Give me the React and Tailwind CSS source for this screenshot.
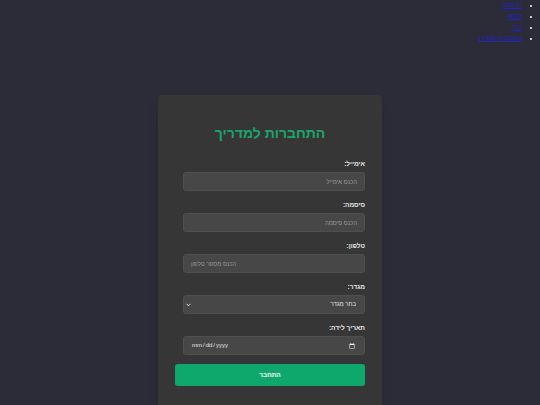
import React from 'react';

const navLinks = ['הרשמה', 'כניסה', 'בית', 'התחברות למדריך'];

const inputClass =
    'block w-[182px] h-[19px] rounded-[3px] bg-[#474747] border border-[#4f4f4f] px-[7px] text-[6px] text-[#e5e5e5] placeholder:text-[#9a9a9a] outline-none';

function Field({ label, children }) {
    return (
        <div className="flex flex-col items-start mb-[10px]">
            <label className="text-[6.5px] leading-[8px] font-bold text-[#e6e6e6] mb-[4px]">{label}</label>
            {children}
        </div>
    );
}

export default function App() {
    return (
        <div
            dir="rtl"
            className="min-h-screen bg-[#2b2c37] pb-10"
            style={{ fontFamily: '"Liberation Sans", "DejaVu Sans", sans-serif' }}
        >
            {/* תפריט עליון */}
            <ul className="list-disc pr-[18px] text-[6px] marker:text-white">
                {navLinks.map((item) => (
                    <li key={item} className="h-[11px] leading-[11px]">
                        <a href="#" className="text-[#2222cc] underline">{item}</a>
                    </li>
                ))}
            </ul>

            {/* כרטיס התחברות */}
            <div className="mx-auto mt-[51px] w-[224px] rounded-[4px] bg-[#363636] px-[17px] pt-[30px] pb-[24px] shadow-lg">
                <h1 className="text-center text-[14px] leading-[16px] font-bold text-[#19a56c] mb-[19px]">
                    התחברות למדריך
                </h1>

                <form>
                    <Field label="אימייל:">
                        <input type="email" placeholder="הכנס אימייל" className={inputClass} />
                    </Field>
                    <Field label="סיסמה:">
                        <input type="password" placeholder="הכנס סיסמה" className={inputClass} />
                    </Field>
                    <Field label="טלפון:">
                        <input type="tel" placeholder="הכנס מספר טלפון" className={inputClass} />
                    </Field>
                    <Field label="מגדר:">
                        <div className="relative">
                            <select className={inputClass + ' appearance-none pr-[8px] text-[#dcdcdc]'} defaultValue="">
                                <option value="">בחר מגדר</option>
                                <option value="male">זכר</option>
                                <option value="female">נקבה</option>
                            </select>
                            <svg
                                className="pointer-events-none absolute left-[3px] top-[8px]"
                                width="5"
                                height="4"
                                viewBox="0 0 5 4"
                            >
                                <path d="M0.6 0.8 L2.5 2.8 L4.4 0.8" fill="none" stroke="#e0e0e0" strokeWidth="1" />
                            </svg>
                        </div>
                    </Field>
                    <Field label="תאריך לידה:">
                        <input type="date" dir="ltr" className={inputClass + ' [color-scheme:dark] text-[#dcdcdc]'} />
                    </Field>

                    <button
                        type="submit"
                        className="-mt-[1px] block w-full h-[22px] rounded-[3px] bg-[#0fa86c] text-white text-[6.5px] font-bold"
                    >
                        התחבר
                    </button>
                </form>
            </div>
        </div>
    );
}
